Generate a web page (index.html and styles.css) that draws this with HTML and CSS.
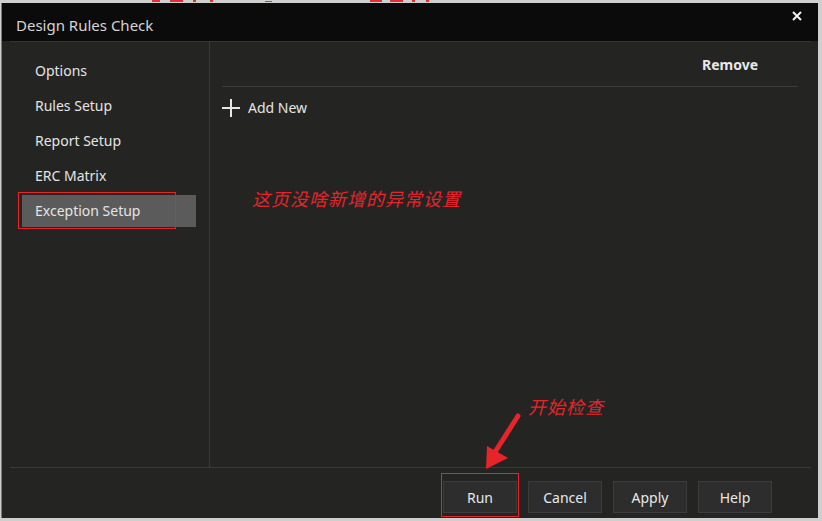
FILE: index.html
```html
<!DOCTYPE html>
<html lang="zh-CN">
<head>
    <meta charset="UTF-8">
    <title>Design Rules Check</title>
    <link rel="stylesheet" href="styles.css">
</head>
<body>
    <div class="backdrop">
        <span class="mark" style="margin-left:152px;width:8px"></span>
        <span class="mark" style="margin-left:10px;width:13px"></span>
        <span class="mark" style="margin-left:10px;width:3px"></span>
        <span class="mark" style="margin-left:14px;width:3px"></span>
        <span class="mark green" style="margin-left:52px;width:7px"></span>
        <span class="mark" style="margin-left:98px;width:12px"></span>
        <span class="mark" style="margin-left:8px;width:13px"></span>
        <span class="mark" style="margin-left:9px;width:3px"></span>
        <span class="mark" style="margin-left:11px;width:3px"></span>
    </div>

    <div class="dialog">
        <div class="titlebar">
            <span class="title">Design Rules Check</span>
            <svg class="close" width="10" height="10" viewBox="0 0 10 10">
                <path d="M1 1 L9 9 M9 1 L1 9" stroke="#f2f2f2" stroke-width="2"/>
            </svg>
        </div>

        <div class="content">
            <div class="main">
                <div class="sidebar">
                    <div class="nav-item">Options</div>
                    <div class="nav-item">Rules Setup</div>
                    <div class="nav-item">Report Setup</div>
                    <div class="nav-item">ERC Matrix</div>
                    <div class="nav-item active">
                        Exception Setup
                        <span class="red-box box-nav"></span>
                    </div>
                </div>

                <div class="panel">
                    <div class="panel-header">
                        <span class="remove">Remove</span>
                    </div>
                    <div class="add-row">
                        <svg width="18" height="18" viewBox="0 0 18 18">
                            <path d="M9 0 V18 M0 9 H18" stroke="#e6e6e6" stroke-width="2"/>
                        </svg>
                        <span>Add New</span>
                    </div>
                    <div class="note note-empty">这页没啥新增的异常设置</div>
                </div>
            </div>

            <div class="footer">
                <button class="btn">Run<span class="red-box box-run"></span></button>
                <button class="btn">Cancel</button>
                <button class="btn">Apply</button>
                <button class="btn">Help</button>
            </div>
        </div>

        <div class="note note-run">开始检查</div>
        <svg class="arrow" width="50" height="70" viewBox="0 0 50 70">
            <path d="M37 14 L14 50" stroke="#e8242b" stroke-width="5" stroke-linecap="round"/>
            <path d="M5 67 L6 44 L27 56 Z" fill="#e8242b"/>
        </svg>
    </div>
</body>
</html>
```

FILE: styles.css
```css
body {
    margin: 0;
    padding: 0;
    background-color: #cfcfcf;
    font-family: "Noto Sans", "Open Sans", sans-serif;
    width: 822px;
    height: 521px;
    overflow: hidden;
}
.backdrop {
    height: 3px;
    display: flex;
    align-items: flex-start;
}
.mark {
    height: 2px;
    background-color: #e03030;
}
.mark.green {
    background-color: #3c8a3c;
    margin-top: 1px;
    height: 1px;
}
.dialog {
    position: relative;
    width: 817px;
    height: 515px;
    margin-left: 1px;
    border-left: 1px solid #7a7a7a;
    box-sizing: border-box;
    background-color: #242523;
    display: flex;
    flex-direction: column;
}
.titlebar {
    height: 38px;
    background-color: #0b0b0b;
    display: flex;
    align-items: center;
    justify-content: space-between;
    padding: 0 16px 0 14px;
    flex-shrink: 0;
}
.title {
    color: #d4d4d4;
    font-size: 15px;
    margin-top: 6px;
}
.close {
    margin-top: -12px;
}
.content {
    flex: 1;
    display: flex;
    flex-direction: column;
    padding: 0 7px 0 8px;
}
.main {
    height: 425px;
    display: flex;
    border-top: 1px solid #363735;
    border-bottom: 1px solid #3a3b39;
}
.sidebar {
    width: 174px;
    padding: 13px 13px 0 12px;
    border-right: 1px solid #393a38;
    flex-shrink: 0;
}
.nav-item {
    position: relative;
    height: 32px;
    line-height: 32px;
    margin-bottom: 3px;
    padding-left: 13px;
    color: #e4e4e4;
    font-size: 14px;
}
.nav-item.active {
    background-color: #5b5b5b;
}
.red-box {
    position: absolute;
    border: 1px solid #e8242b;
    pointer-events: none;
}
.box-nav {
    left: -4px;
    top: -3px;
    width: 156px;
    height: 35px;
}
.panel {
    flex: 1;
    padding: 0 13px 0 12px;
}
.panel-header {
    height: 44px;
    display: flex;
    align-items: center;
    justify-content: flex-end;
    padding-right: 40px;
    border-bottom: 1px solid #3d3e3c;
}
.remove {
    color: #e8e8e8;
    font-size: 14px;
    font-weight: bold;
    margin-top: 1px;
}
.add-row {
    display: flex;
    align-items: center;
    gap: 8px;
    margin-top: 11px;
    color: #e4e4e4;
    font-size: 14px;
}
.note {
    color: #e8242b;
    font-family: "Noto Sans CJK SC", sans-serif;
    font-style: italic;
    font-size: 18px;
    letter-spacing: 1px;
}
.note-empty {
    margin-top: 68px;
    margin-left: 30px;
}
.note-run {
    position: absolute;
    left: 526px;
    top: 390px;
}
.arrow {
    position: absolute;
    left: 479px;
    top: 399px;
}
.footer {
    flex: 1;
    display: flex;
    justify-content: flex-end;
    align-items: flex-start;
    gap: 11px;
    padding: 13px 39px 0 0;
}
.btn {
    position: relative;
    width: 74px;
    height: 32px;
    background-color: #2d2d2d;
    border: 1px solid #3c3c3c;
    color: #e8e8e8;
    font-family: "Noto Sans", "Open Sans", sans-serif;
    font-size: 14px;
    padding: 0;
}
.box-run {
    left: -3px;
    top: -9px;
    width: 76px;
    height: 42px;
}
```
